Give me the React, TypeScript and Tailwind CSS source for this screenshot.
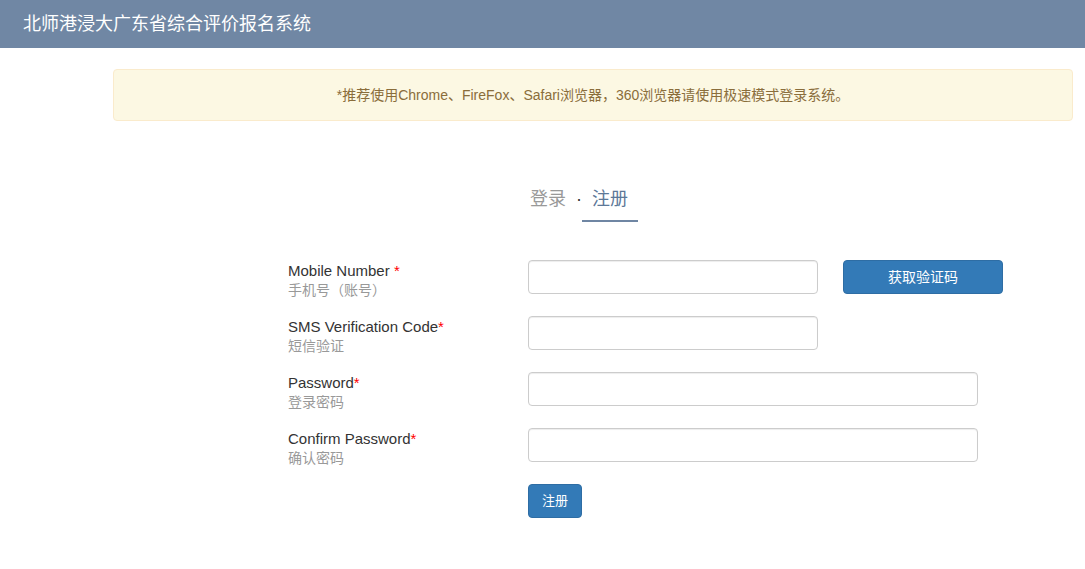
import React from "react";

type Field = {
  label: string;
  sub: string;
  spaced?: boolean;
  width: string;
  type: string;
  withCode?: boolean;
};

const fields: Field[] = [
  { label: "Mobile Number", sub: "手机号（账号）", spaced: true, width: "w-[290px]", type: "text", withCode: true },
  { label: "SMS Verification Code", sub: "短信验证", width: "w-[290px]", type: "text" },
  { label: "Password", sub: "登录密码", width: "w-[450px]", type: "password" },
  { label: "Confirm Password", sub: "确认密码", width: "w-[450px]", type: "password" },
];

export default function App() {
  return (
    <div className="min-h-[569px] bg-white font-['Liberation_Sans','Noto_Sans_CJK_SC',sans-serif] text-[#333]">
      <header className="flex h-[48px] items-center bg-[#7087a4] pl-[23px]">
        <h1 className="text-[18px] leading-[24px] text-white">北师港浸大广东省综合评价报名系统</h1>
      </header>

      <div className="ml-[113px] mt-[21px] w-[960px] rounded-[4px] border border-[#faebcc] bg-[#fcf8e3] py-[15px] text-center text-[14px] leading-[20px] text-[#8a6d3b]">
        *推荐使用Chrome、FireFox、Safari浏览器，360浏览器请使用极速模式登录系统。
      </div>

      <div className="mt-[66px] flex items-start pl-[530px] text-[18px] leading-[24px]">
        <span className="text-[#999]">登录</span>
        <span className="ml-[10px] text-[#333]">·</span>
        <span className="border-b-2 border-[#6f86a3] px-[10px] pb-[9px] text-[#5d7898]">注册</span>
      </div>

      <form className="mt-[38px] pl-[288px]" onSubmit={(e) => e.preventDefault()}>
        {fields.map((f) => (
          <div key={f.label} className="flex h-[56px] items-start">
            <div className="w-[240px]">
              <div className="text-[15px] leading-[21px] text-[#333]">
                {f.label}
                {f.spaced ? " " : ""}
                <span className="text-[#f00]">*</span>
              </div>
              <div className="text-[14px] leading-[19px] text-[#999]">{f.sub}</div>
            </div>
            <input
              type={f.type}
              className={`${f.width} h-[34px] rounded-[4px] border border-[#ccc] px-3 text-[14px] shadow-[inset_0_1px_1px_rgba(0,0,0,0.075)] outline-none`}
            />
            {f.withCode && (
              <button
                type="button"
                className="ml-[25px] h-[34px] w-[160px] rounded-[4px] border border-[#2e6da4] bg-[#337ab7] text-[14px] text-white"
              >
                获取验证码
              </button>
            )}
          </div>
        ))}
        <div className="pl-[240px]">
          <button
            type="submit"
            className="h-[34px] w-[54px] rounded-[4px] border border-[#2e6da4] bg-[#337ab7] text-[13px] text-white"
          >
            注册
          </button>
        </div>
      </form>
    </div>
  );
}
